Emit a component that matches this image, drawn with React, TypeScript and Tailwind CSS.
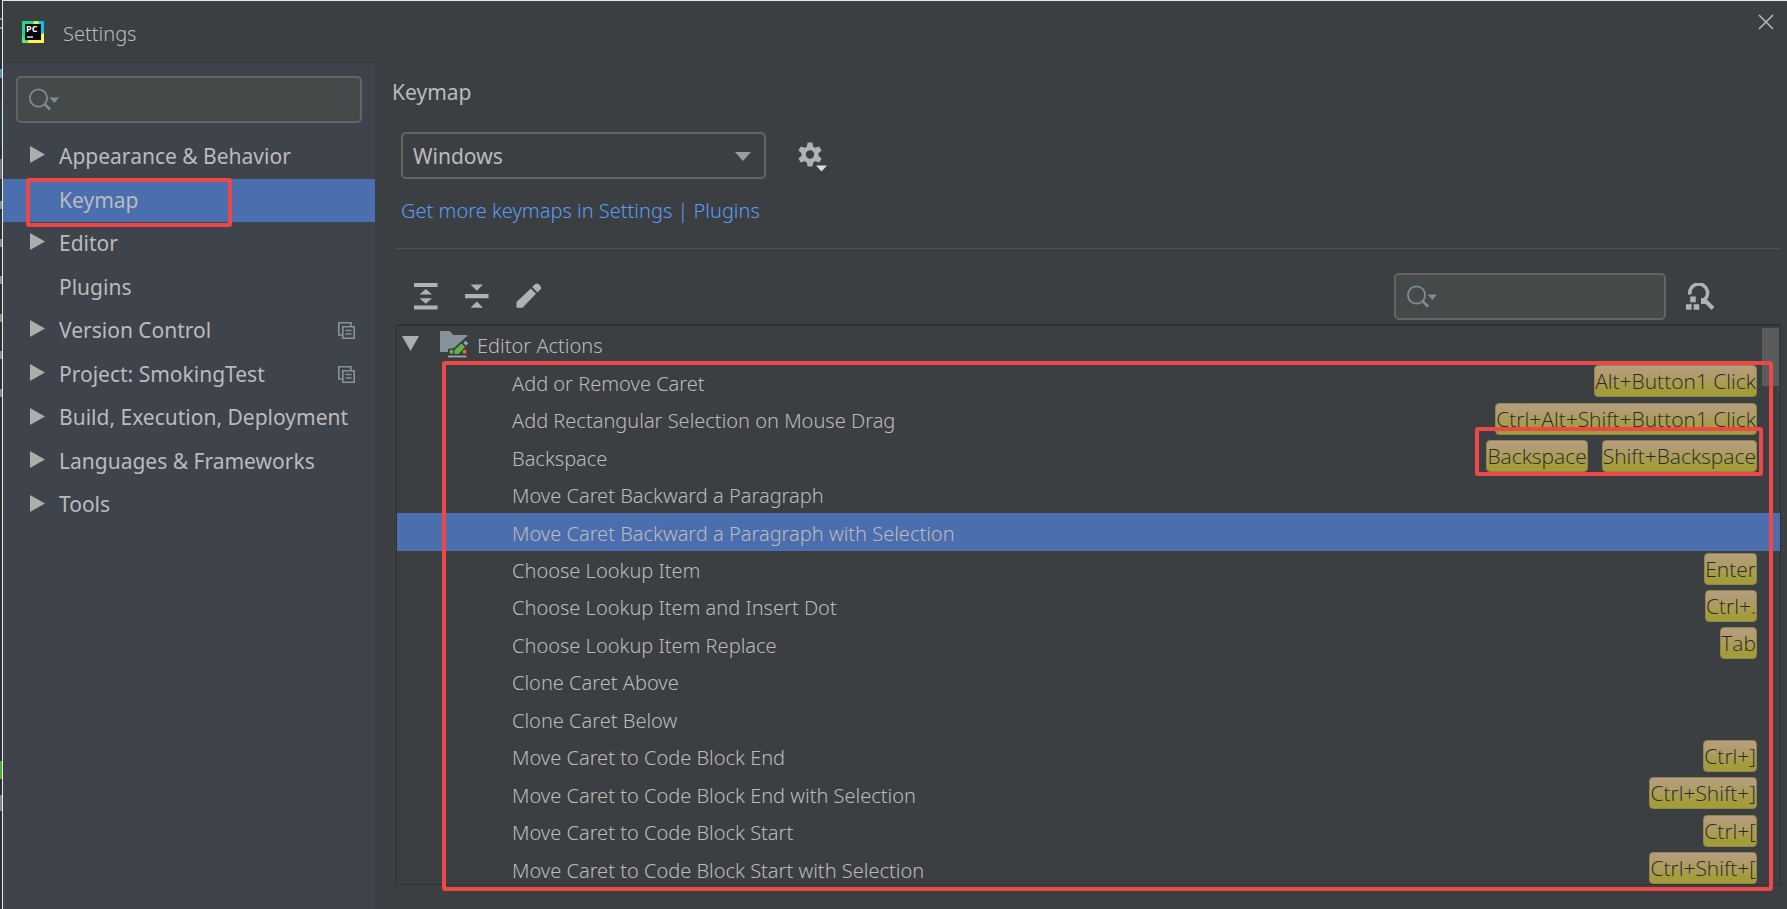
import React from "react";

type NavItem = { label: string; arrow: boolean; scoped?: boolean; selected?: boolean };
type Action = { label: string; keys: string[]; selected?: boolean; marked?: boolean };

const navItems: NavItem[] = [
  { label: "Appearance & Behavior", arrow: true },
  { label: "Keymap", arrow: false, selected: true },
  { label: "Editor", arrow: true },
  { label: "Plugins", arrow: false },
  { label: "Version Control", arrow: true, scoped: true },
  { label: "Project: SmokingTest", arrow: true, scoped: true },
  { label: "Build, Execution, Deployment", arrow: true },
  { label: "Languages & Frameworks", arrow: true },
  { label: "Tools", arrow: true },
];

const actions: Action[] = [
  { label: "Add or Remove Caret", keys: ["Alt+Button1 Click"] },
  { label: "Add Rectangular Selection on Mouse Drag", keys: ["Ctrl+Alt+Shift+Button1 Click"] },
  { label: "Backspace", keys: ["Backspace", "Shift+Backspace"], marked: true },
  { label: "Move Caret Backward a Paragraph", keys: [] },
  { label: "Move Caret Backward a Paragraph with Selection", keys: [], selected: true },
  { label: "Choose Lookup Item", keys: ["Enter"] },
  { label: "Choose Lookup Item and Insert Dot", keys: ["Ctrl+."] },
  { label: "Choose Lookup Item Replace", keys: ["Tab"] },
  { label: "Clone Caret Above", keys: [] },
  { label: "Clone Caret Below", keys: [] },
  { label: "Move Caret to Code Block End", keys: ["Ctrl+]"] },
  { label: "Move Caret to Code Block End with Selection", keys: ["Ctrl+Shift+]"] },
  { label: "Move Caret to Code Block Start", keys: ["Ctrl+["] },
  { label: "Move Caret to Code Block Start with Selection", keys: ["Ctrl+Shift+["] },
];

function AppLogo() {
  return (
    <svg width="22" height="22" viewBox="0 0 22 22" aria-hidden="true">
      <rect width="22" height="22" fill="#21d789" />
      <path d="M14 0H22V16L17 8Z" fill="#07c3f2" />
      <path d="M12 0H16L18 4H11Z" fill="#d8f04a" />
      <path d="M5 22L7 18L22 12V22Z" fill="#fcf84a" />
      <path d="M0 14L6 22H0Z" fill="#5fe070" />
      <rect x="3" y="3" width="16" height="16" fill="#050505" />
      <rect x="5" y="15.4" width="6" height="1.3" fill="#fff" />
      <text x="4" y="11.4" fontSize="9" fontWeight="700" fill="#fff" fontFamily="Open Sans, sans-serif">
        PC
      </text>
    </svg>
  );
}

function SearchGlyph() {
  return (
    <svg width="32" height="24" viewBox="0 0 32 24" fill="none" aria-hidden="true">
      <circle cx="9.5" cy="10" r="8.6" stroke="#7d8b94" strokeWidth="1.8" />
      <path d="M15.5 16L21 21.5" stroke="#7d8b94" strokeWidth="2.6" />
      <path d="M20.5 9.5H30L25.3 15Z" fill="#7d8b94" />
    </svg>
  );
}

function SearchBox({ label }: { label: string }) {
  return (
    <label className="flex h-[47px] w-full items-center rounded-[5px] border-2 border-[#646464] bg-[#45494a] pl-[11px]">
      <SearchGlyph />
      <input type="text" aria-label={label} className="min-w-0 flex-1 bg-transparent px-2 text-[20px] text-[#bbbbbb] outline-none" />
    </label>
  );
}

function RightArrow() {
  return (
    <svg width="15" height="17" viewBox="0 0 15 17" aria-hidden="true">
      <path d="M0 0L15 8.5L0 17Z" fill="#adadad" />
    </svg>
  );
}

function ScopeIcon() {
  return (
    <svg width="17" height="17" viewBox="0 0 17 17" fill="none" stroke="#87939a" strokeWidth="1.6" className="shrink-0" aria-hidden="true">
      <path d="M4 13H.8V.8H13V4" />
      <path d="M4.8 4.8H16.2V16.2H4.8Z" />
      <path d="M7.5 8.5H13.5M7.5 12H13.5" strokeWidth="1.6" />
    </svg>
  );
}

function GearIcon() {
  const teeth = [0, 60, 120, 180, 240, 300];
  return (
    <svg width="30" height="30" viewBox="0 0 30 30" aria-hidden="true">
      <g fill="#afb1b3">
        {teeth.map((a) => (
          <path key={a} d="M9.6 0.5H14.4L15.4 6H8.6Z" transform={`rotate(${a} 12 12.5)`} />
        ))}
      </g>
      <circle cx="12" cy="12.5" r="6.4" fill="none" stroke="#afb1b3" strokeWidth="4.4" />
      <path d="M18 23.5H29L23.5 29.5Z" fill="#dcdcdc" />
    </svg>
  );
}

function ExpandIcon() {
  return (
    <svg width="24" height="28" viewBox="0 0 24 28" fill="#afb1b3" aria-hidden="true">
      <path d="M0 0H23.5V4H0ZM0 22.5H23.5V26.5H0ZM11.8 6L18 11.5H5.5ZM5.5 15.3H18L11.8 20.8Z" />
    </svg>
  );
}

function CollapseIcon() {
  return (
    <svg width="24" height="28" viewBox="0 0 24 28" fill="#afb1b3" aria-hidden="true">
      <path d="M0 11H23.5V15.3H0ZM5.5 1.5H18L11.8 7.8ZM11.8 18.5L18 24.7H5.5Z" />
    </svg>
  );
}

function PencilIcon() {
  return (
    <svg width="26" height="28" viewBox="0 0 26 28" fill="#afb1b3" aria-hidden="true">
      <path d="M.5 19L14.8 5.5L20 10.7L6.5 24.8H.5Z" />
      <path d="M16.2 4.1L19 1.2Q20.8 -.4 22.8 1.2L24.4 3Q26 4.8 24.4 6.6L21.4 9.4Z" />
    </svg>
  );
}

function FindShortcutIcon() {
  return (
    <svg width="30" height="28" viewBox="0 0 30 28" aria-hidden="true">
      <path d="M3.9 11.5A8.9 8.9 0 1 1 15.5 18.4" fill="none" stroke="#afb1b3" strokeWidth="3.6" />
      <path d="M18 16.5L27 25.5" stroke="#afb1b3" strokeWidth="4" />
      <path d="M15 15H20V21H15Z" fill="#afb1b3" />
      <path d="M4.2 13.6H9.8V19.2H4.2ZM0 21.2H5.6V26.8H0ZM7.6 21.2H13.2V26.8H7.6Z" fill="#afb1b3" />
    </svg>
  );
}

function EditorFolderIcon() {
  return (
    <svg width="29" height="27" viewBox="0 0 29 27" aria-hidden="true">
      <path d="M0 0H9.5L13.5 4H27V21H0Z" fill="#87939a" />
      <path d="M8 27V18L14 17L26 6H29V27Z" fill="#3c3f41" />
      <path d="M14.5 23V19L21.5 12.5L25 16L18.5 23Z" fill="#62b543" />
      <path d="M23.4 11.8L25.4 9.8L28.3 12.3L26 14.6Z" fill="#9aa7b0" />
      <circle cx="11.5" cy="20.8" r="2" fill="#62b543" />
      <circle cx="24.6" cy="20.8" r="2" fill="#f26522" />
      <path d="M8 24.6H26.5V26.4H8Z" fill="#9aa7b0" />
    </svg>
  );
}

function KeyChip({ text }: { text: string }) {
  return (
    <kbd className="mb-[2px] h-[32px] rounded-[4px] border border-[#8f8752] bg-linear-to-b from-[#b89d80] to-[#a39c37] to-85% font-['Open_Sans',sans-serif] text-[21px] leading-[31px] text-[#2b2b2b]">
      {text}
    </kbd>
  );
}

const markBox = "pointer-events-none absolute rounded-[3px] border-4 border-[#ec4848]";

export default function App() {
  return (
    <div className="flex min-h-screen bg-[#2b2b2b] font-['Noto_Sans','Open_Sans',sans-serif] text-[20px] text-[#bbbbbb]">
      <div className="flex w-[2px] flex-col bg-[#2f3133]" aria-hidden="true">
        <span className="mt-[18px] h-[2px] bg-[#8a8a8a]" />
        <span className="mt-[7px] h-[2px] bg-[#8a8a8a]" />
        <span className="mt-[40px] h-[9px] bg-[#5f8fa8]" />
        <span className="mt-[21px] h-[48px] bg-[#2d3a47]" />
        <span className="mt-[12px] h-[20px] bg-[#6d7275]" />
        <span className="mt-[22px] h-[8px] bg-[#8a8a8a]" />
        <span className="mt-[30px] h-[8px] bg-[#8a8a8a]" />
        <span className="mt-[29px] h-[8px] bg-[#8a8a8a]" />
        <span className="mt-[30px] h-[8px] bg-[#8a8a8a]" />
        <span className="mt-[29px] h-[8px] bg-[#8a8a8a]" />
        <span className="mt-[30px] h-[8px] bg-[#8a8a8a]" />
        <span className="mt-[364px] h-[18px] bg-[#57a639]" />
        <span className="mt-[16px] h-[16px] bg-[#7d8489]" />
      </div>
      <div className="flex min-w-0 flex-1 flex-col border-t border-l border-[#e8e8e8] bg-[#3c3f41]">
        <header className="flex h-[62px] items-center pr-[13px] pl-[19px]">
          <AppLogo />
          <h1 className="mt-[3px] ml-[19px] flex-1 font-light">Settings</h1>
          <button type="button" aria-label="Close" className="mb-5">
            <svg width="16" height="16" viewBox="0 0 16 16" fill="none" stroke="#b4b4b4" strokeWidth="1.6" aria-hidden="true">
              <path d="M1 1L15 15M15 1L1 15" />
            </svg>
          </button>
        </header>

        <div className="flex min-h-0 flex-1">
          <aside className="w-[372px] shrink-0 bg-[#3f434c]">
            <div className="px-[13px] pt-[13px]">
              <SearchBox label="Search settings" />
            </div>
            <nav className="mt-3">
              <ul className="grid h-[392px] auto-rows-fr grid-cols-1 text-[21px]">
                {navItems.map((item) => (
                  <li key={item.label} className={item.selected ? "relative bg-[#4b6eaf]" : ""}>
                    <a href="#" className="flex h-full items-center pr-5 pl-[27px]">
                      <span className="mb-1 w-[29px] shrink-0">{item.arrow && <RightArrow />}</span>
                      <span className="flex-1 whitespace-nowrap">{item.label}</span>
                      {item.scoped && <ScopeIcon />}
                    </a>
                    {item.selected && <span className={`${markBox} top-[-1px] left-[23px] h-[49px] w-[206px]`} />}
                  </li>
                ))}
              </ul>
            </nav>
          </aside>

          <main className="flex min-w-0 flex-1 flex-col pr-[6px] pb-6 pl-[21px]">
            <h2 className="mt-[15px] ml-[-4px] h-7 text-[21px] leading-7">Keymap</h2>
            <div className="mt-[26px] flex items-center pl-[5px]">
              <div className="relative w-[365px]">
                <select
                  aria-label="Keymap scheme"
                  className="h-[47px] w-full appearance-none rounded-[5px] border-2 border-[#646464] bg-[#3c3f41] pt-[2px] pl-[10px] text-[21px] text-[#bbbbbb] outline-none"
                >
                  <option>Windows</option>
                </select>
                <svg width="16" height="9" viewBox="0 0 16 9" className="pointer-events-none absolute top-5 right-[15px]" aria-hidden="true">
                  <path d="M0 0H16L8 9Z" fill="#9a9da0" />
                </svg>
              </div>
              <button type="button" aria-label="Keymap options" className="mt-[2px] ml-8">
                <GearIcon />
              </button>
            </div>
            <a href="#" className="mt-[18px] self-start pl-[5px] leading-7 font-light text-[#589df6]">
              Get more keymaps in Settings | Plugins
            </a>
            <hr className="mt-[23px] border-[#515151]" />

            <div className="mt-6 flex h-[47px] items-center pl-[18px]">
              <button type="button" aria-label="Expand all">
                <ExpandIcon />
              </button>
              <button type="button" aria-label="Collapse all" className="ml-[27px]">
                <CollapseIcon />
              </button>
              <button type="button" aria-label="Edit shortcut" className="ml-[27px]">
                <PencilIcon />
              </button>
              <div className="ml-auto w-[272px]">
                <SearchBox label="Search actions" />
              </div>
              <button type="button" aria-label="Find actions by shortcut" className="mr-[65px] ml-5">
                <FindShortcutIcon />
              </button>
            </div>

            <div className="relative mt-1">
              <div className="h-[561px] overflow-hidden border border-t-2 border-[#323232] font-light">
                <ul role="tree" aria-label="Actions" className="grid h-[562px] auto-rows-fr grid-cols-1">
                  <li role="treeitem" aria-expanded="true" className="flex items-center pl-[5px]">
                    <svg width="17" height="15" viewBox="0 0 17 15" className="mb-[2px]" aria-hidden="true">
                      <path d="M0 0H17L8.5 15Z" fill="#adadad" />
                    </svg>
                    <span className="ml-[21px]">
                      <EditorFolderIcon />
                    </span>
                    <span className="ml-2 pt-[2px]">Editor Actions</span>
                  </li>
                  {actions.map((action) => (
                    <li
                      key={action.label}
                      role="treeitem"
                      className={`relative flex items-center gap-[14px] pr-[23px] pl-[115px] ${action.selected ? "bg-[#4b6eaf]" : ""}`}
                    >
                      <span className="flex-1 pt-[3px]">{action.label}</span>
                      {action.keys.map((k) => (
                        <KeyChip key={k} text={k} />
                      ))}
                      {action.marked && <span className={`${markBox} top-[-11px] right-[17px] h-[49px] w-[288px]`} />}
                    </li>
                  ))}
                </ul>
              </div>
              <div className="absolute top-1 right-[2px] h-[58px] w-[17px] bg-[#595b5d]" />
              <div className={`${markBox} top-[37px] right-[8px] bottom-[-6px] left-[46px]`} />
            </div>
          </main>
        </div>
      </div>
    </div>
  );
}
